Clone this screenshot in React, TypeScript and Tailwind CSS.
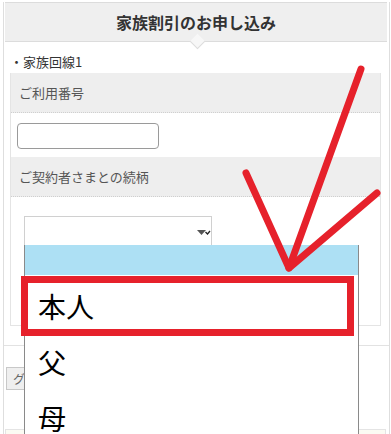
import React from 'react';

const font = { fontFamily: '"Noto Sans CJK JP", "Noto Sans", sans-serif' };

export default function App() {
  return (
    <div className="relative h-[434px] w-[391px] overflow-hidden bg-white text-[#333]" style={font}>
      {/* page frame */}
      <div className="ml-[3px] mt-[2px] h-[440px] w-[387px] border-x border-[#dedede]">
        {/* header */}
        <div className="relative ml-[1px] mr-[2px] flex h-[40px] items-center justify-center border-y border-[#dcdcdc] bg-[#efefef]">
          <h1 className="text-[16px] font-bold leading-none text-[#333]">家族割引のお申し込み</h1>
          <div className="absolute left-[187px] top-[33px] h-[11px] w-[11px] rotate-45 border-b border-r border-[#dcdcdc] bg-[#f7f7f7]" />
        </div>

        <p className="mt-[12px] pl-[6px] text-[13px] leading-[16px] text-[#333]">・家族回線1</p>

        {/* form box */}
        <div className="ml-[6px] mr-[8px] mt-[3px] border-x border-b border-[#e4e4e4]">
          <div className="flex h-[40px] items-center border-b border-dotted border-[#cfcfcf] bg-[#eeeeee] pl-[8px] text-[13px] text-[#555]">
            ご利用番号
          </div>
          <div className="pb-[8px] pl-[6px] pt-[10px]">
            <div className="h-[26px] w-[142px] rounded-[4px] border border-[#9a9a9a] bg-white" />
          </div>
          <div className="flex h-[40px] items-center border-b border-dotted border-[#cfcfcf] bg-[#eeeeee] pl-[8px] text-[13px] text-[#555]">
            ご契約者さまとの続柄
          </div>
          <div className="h-[128px] pl-[13px] pt-[19px]">
            <div className="relative h-[34px] w-[188px] border border-[#d0d0d0] bg-white">
              <svg className="absolute left-[172px] top-[12px]" width="14" height="8" viewBox="0 0 14 8">
                <path d="M0 1h9L4.5 6z" fill="#555" />
                <path d="M8.5 3l2 2 2.5-3" fill="none" stroke="#222" strokeWidth="1.3" />
              </svg>
            </div>
          </div>
        </div>

        <div className="mt-[19px] border-t border-[#e2e2e2]" />
        <div className="mt-[21px] ml-[2px] flex h-[23px] w-[60px] items-center border border-[#c8c8c8] bg-[#efefef] pl-[6px] text-[12px] text-[#666]">
          グループ
        </div>
        <div className="mt-[39px] ml-[1px] mr-[3px] h-[20px] border border-[#e4e4e4] bg-[#fbfbf3]" />
      </div>

      {/* open select list */}
      <div className="absolute left-[24px] top-[245px] w-[335px] border-x border-[#8a8a8a] bg-white">
        <div className="h-[30px] bg-[#ade0f4]" />
        <div className="flex h-[56px] items-center pl-[13px] pt-[5px] text-[28px] leading-none text-black">本人</div>
        <div className="flex h-[56px] items-center pl-[13px] pt-[5px] text-[28px] leading-none text-black">父</div>
        <div className="flex h-[56px] items-center pl-[13px] pt-[5px] text-[28px] leading-none text-black">母</div>
      </div>

      {/* red highlight */}
      <div className="absolute left-[21px] top-[276px] h-[60px] w-[333px] border-[7px] border-[#e6212b]" />
      <svg className="pointer-events-none absolute left-0 top-0" width="391" height="434" viewBox="0 0 391 434">
        <g stroke="#e6212b" strokeWidth="7" strokeLinecap="round" strokeLinejoin="round" fill="none">
          <path d="M361 69L289 268" />
          <path d="M246 173L289 268L377 193" />
        </g>
      </svg>
    </div>
  );
}
